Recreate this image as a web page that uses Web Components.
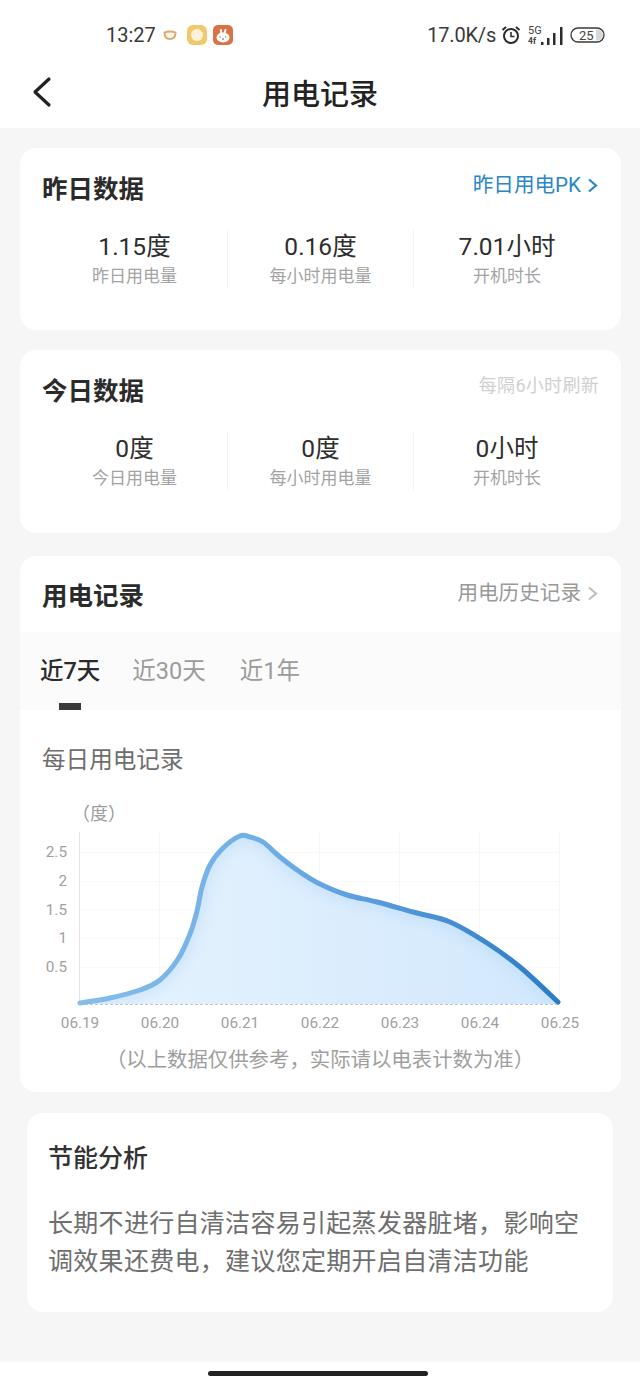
<!DOCTYPE html>
<html lang="zh">
<head>
<meta charset="utf-8">
<title>用电记录</title>
<style>
    html, body {
        margin: 0;
        background: #f6f6f6;
        font-family: "Roboto", "Noto Sans CJK SC", sans-serif;
    }
    body {
        width: 640px;
        height: 1387px;
        overflow: hidden;
        display: flex;
        flex-direction: column;
    }
    main {
        flex: 1;
        display: flex;
        flex-direction: column;
        padding: 20px 19px 0 20px;
    }
</style>
</head>
<body>
<app-header heading="用电记录"></app-header>
<main>
    <data-card heading="昨日数据" style="height:182px">
        <a-link slot="aside" color="#2a86c4">昨日用电PK</a-link>
        <stat-item value="1.15度" label="昨日用电量"></stat-item>
        <stat-item value="0.16度" label="每小时用电量"></stat-item>
        <stat-item value="7.01小时" label="开机时长"></stat-item>
    </data-card>
    <data-card heading="今日数据" style="height:183px;margin-top:20px">
        <span slot="aside" style="color:#d0d0d0;font-size:18px;letter-spacing:.3px;position:relative;top:-1px">每隔6小时刷新</span>
        <stat-item value="0度" label="今日用电量"></stat-item>
        <stat-item value="0度" label="每小时用电量"></stat-item>
        <stat-item value="0小时" label="开机时长"></stat-item>
    </data-card>
    <record-card></record-card>
    <advice-card heading="节能分析">长期不进行自清洁容易引起蒸发器脏堵，影响空调效果还费电，建议您定期开启自清洁功能</advice-card>
</main>
<home-bar></home-bar>

<script>
class AppHeader extends HTMLElement {
    constructor() {
        super();
        this.attachShadow({mode: "open"});
        this.shadowRoot.innerHTML = `
            <style>
                :host {
                    display: block;
                    height: 128px;
                    background: #fff;
                    color: #2b2b2b;
                }
                .status {
                    height: 70px;
                    box-sizing: border-box;
                    padding: 0 34px 0 106px;
                    display: flex;
                    align-items: center;
                    font-size: 20px;
                    color: #3a3a3a;
                }
                .status svg { display: block; flex: none; }
                .grow { flex: 1; }
                .title {
                    height: 58px;
                    margin-top: -7px;
                    display: flex;
                    align-items: center;
                    justify-content: center;
                    position: relative;
                    font-size: 29px;
                    font-weight: 500;
                    color: #222;
                }
                .back { position: absolute; left: 32px; top: 13px; }
            </style>
            <div class="status">
                <span>13:27</span>
                <svg width="14" height="12" viewBox="0 0 14 12" style="margin-left:7px">
                    <path d="M1.500 3.500C4 2 10 2 12.500 3.500C12.500 7.500 10.500 10 7 10S1.500 7.500 1.500 3.500z" fill="#fbf3e6" stroke="#d9ab74" stroke-width="2"/>
                </svg>
                <svg width="20" height="20" viewBox="0 0 20 20" style="margin-left:10px">
                    <rect width="20" height="20" rx="6" fill="#f2c96a"/>
                    <circle cx="10" cy="10" r="6" fill="#fdf3d8"/>
                </svg>
                <svg width="20" height="20" viewBox="0 0 20 20" style="margin-left:6px">
                    <rect width="20" height="20" rx="5" fill="#dc7148"/>
                    <ellipse cx="10" cy="12.500" rx="6.500" ry="5" fill="#fff"/>
                    <path d="M8 8V5M11.500 8l1-3" stroke="#fff" stroke-width="2" stroke-linecap="round"/>
                    <path d="M6.500 12h1.200M12 12h1.200M9 14h2" stroke="#8a4a33" stroke-width="1"/>
                </svg>
                <span class="grow"></span>
                <span style="letter-spacing:-.2px">17.0K/s</span>
                <svg width="20" height="20" viewBox="0 0 20 20" style="margin-left:5px" fill="none" stroke="#2c2c2c">
                    <circle cx="10" cy="11" r="7" stroke-width="2"/>
                    <path d="M10 7v4.500h3.500" stroke-width="1.600"/>
                    <path d="M1.500 5L5 2M18.500 5L15 2" stroke-width="2"/>
                </svg>
                <svg width="35" height="22" viewBox="0 0 35 22" style="margin-left:7px">
                    <text x="0" y="9.500" font-size="11" fill="#444" font-family="Roboto">5G</text>
                    <text x="0" y="20" font-size="8.500" font-weight="700" fill="#444" font-family="Roboto">4f</text>
                    <g fill="#2c2c2c">
                        <rect x="13" y="18" width="2.500" height="3"/>
                        <rect x="19" y="14" width="2.500" height="7"/>
                        <rect x="25" y="9" width="2.500" height="12"/>
                        <rect x="32" y="3" width="2.500" height="18"/>
                    </g>
                </svg>
                <svg width="36" height="18" viewBox="0 0 36 18" style="margin-left:7px">
                    <rect x="1" y="2" width="33" height="14" rx="7" fill="none" stroke="#3a3a3a" stroke-width="1.300"/>
                    <path d="M26 3.500h1.500a5.500 5.500 0 0 1 0 11H26z" fill="#d8d8d8"/>
                    <text x="9" y="13.500" font-size="13" fill="#444" font-family="Roboto">25</text>
                </svg>
            </div>
            <div class="title">
                <svg class="back" width="20" height="32" viewBox="0 0 20 32" fill="none" stroke="#222" stroke-width="3.200" stroke-linecap="round" stroke-linejoin="round">
                    <path d="M17 3L3 16l14 13"/>
                </svg>
                <span>${this.getAttribute("heading")}</span>
            </div>
        `;
    }
}
window.customElements.define('app-header', AppHeader);

class ALink extends HTMLElement {
    constructor() {
        super();
        this.attachShadow({mode: "open"});
        const color = this.getAttribute("color");
        this.shadowRoot.innerHTML = `
            <style>
                :host {
                    display: inline-flex;
                    align-items: center;
                    gap: 6px;
                    margin-right: 1px;
                    font-size: 20.600px;
                    color: ${color};
                }
            </style>
            <slot></slot>
            <svg width="11" height="15" viewBox="0 0 11 15" fill="none" stroke="${color}" stroke-width="2.200">
                <path d="M2 1.500L9 7.500l-7 6"/>
            </svg>
        `;
    }
}
window.customElements.define('a-link', ALink);

class DataCard extends HTMLElement {
    constructor() {
        super();
        this.attachShadow({mode: "open"});
        this.shadowRoot.innerHTML = `
            <style>
                :host {
                    display: block;
                    box-sizing: border-box;
                    background: #fff;
                    border-radius: 16px;
                    padding: 22px 22px 0 22px;
                    flex: none;
                }
                .top {
                    display: flex;
                    justify-content: space-between;
                    align-items: flex-start;
                    height: 40px;
                }
                h3 {
                    margin: 0;
                    font-size: 25.500px;
                    line-height: 38px;
                    font-weight: 700;
                    color: #2b2b2b;
                }
                .aside { line-height: 30px; }
                .stats {
                    display: grid;
                    grid-template-columns: 186px 186px 186px;
                    margin-top: 20px;
                }
            </style>
            <div class="top">
                <h3>${this.getAttribute("heading")}</h3>
                <div class="aside"><slot name="aside"></slot></div>
            </div>
            <div class="stats"><slot></slot></div>
        `;
    }
}
window.customElements.define('data-card', DataCard);

class StatItem extends HTMLElement {
    constructor() {
        super();
        this.attachShadow({mode: "open"});
        this.shadowRoot.innerHTML = `
            <style>
                :host {
                    display: flex;
                    flex-direction: column;
                    align-items: center;
                    height: 58px;
                    border-right: 1px solid #f2f2f2;
                }
                :host(:last-child) { border-right: 0; }
                .value {
                    font-size: 24.500px;
                    line-height: 34px;
                    color: #2e2e2e;
                }
                .label {
                    font-size: 17px;
                    line-height: 24px;
                    color: #a3a3a3;
                }
            </style>
            <span class="value">${this.getAttribute("value")}</span>
            <span class="label">${this.getAttribute("label")}</span>
        `;
    }
}
window.customElements.define('stat-item', StatItem);

class TabBar extends HTMLElement {
    constructor() {
        super();
        this.attachShadow({mode: "open"});
        this.shadowRoot.innerHTML = `
            <style>
                :host {
                    display: flex;
                    gap: 32px;
                    height: 78px;
                    box-sizing: border-box;
                    padding: 18px 0 0 20px;
                    background: #fbfbfb;
                    font-size: 23.500px;
                    line-height: 42px;
                    color: #9c9c9c;
                }
                .on {
                    position: relative;
                    color: #2b2b2b;
                    font-weight: 500;
                }
                .on::after {
                    content: "";
                    position: absolute;
                    left: 19px;
                    width: 22px;
                    height: 7px;
                    bottom: 0;
                    background: #3a3a3a;
                }
                .last { margin-left: 2px; }
            </style>
            <span class="on">近7天</span>
            <span>近30天</span>
            <span class="last">近1年</span>
        `;
    }
}
window.customElements.define('tab-bar', TabBar);

// smooth line through the points read off the curve
function smoothLine(p) {
    let d = `M${p[0][0]} ${p[0][1]}`;
    for (let i = 0; i < p.length - 1; i++) {
        const a = p[i - 1] || p[i], b = p[i], c = p[i + 1], e = p[i + 2] || c;
        const c1 = [b[0] + (c[0] - a[0]) / 6, b[1] + (c[1] - a[1]) / 6];
        const c2 = [c[0] - (e[0] - b[0]) / 6, c[1] - (e[1] - b[1]) / 6];
        d += ` C${c1[0].toFixed(1)} ${c1[1].toFixed(1)} ${c2[0].toFixed(1)} ${c2[1].toFixed(1)} ${c[0]} ${c[1]}`;
    }
    return d;
}

class UsageChart extends HTMLElement {
    constructor() {
        super();
        this.attachShadow({mode: "open"});
        const line = smoothLine([
            [80, 1003], [110, 998], [140, 990], [160, 980], [178, 959], [190, 934], [197, 911],
            [202, 887], [210, 865], [223, 848], [240, 836], [250, 837], [263, 842], [280, 857],
            [300, 872], [320, 884], [347, 895], [377, 902], [417, 913], [450, 922], [487, 943],
            [520, 967], [558, 1002]
        ]);
        const xs = ["06.19", "06.20", "06.21", "06.22", "06.23", "06.24", "06.25"];
        const ys = [["2.5", 852], ["2", 881], ["1.5", 909.500], ["1", 938], ["0.5", 967]];
        let grid = "";
        xs.forEach((d, i) => {
            const x = 80 + i * 80;
            grid += `<path d="M${x - .5} 832V1004" stroke="${i ? "#f7f7f7" : "#e6e6e6"}"/>`;
            grid += `<text x="${x}" y="1028" text-anchor="middle" class="tick">${d}</text>`;
        });
        ys.forEach(([t, y]) => {
            grid += `<path d="M80 ${y + .5}H560" stroke="#f9f9f9"/>`;
            grid += `<text x="67" y="${y + 5}" text-anchor="end" class="tick">${t}</text>`;
        });
        const area = `${line} L560 1004 H80 Z`;
        this.shadowRoot.innerHTML = `
            <style>
                :host { display: block; height: 292px; }
                svg { display: block; }
                .tick { font-size: 15.300px; fill: #a0a0a0; font-family: "Roboto", sans-serif; }
                .unit { font-size: 18px; fill: #9c9c9c; font-family: "Noto Sans CJK SC", sans-serif; }
            </style>
            <svg width="601" height="292" viewBox="20 790 601 292">
                <defs>
                    <linearGradient id="stroke" gradientUnits="userSpaceOnUse" x1="80" y1="0" x2="560" y2="0">
                        <stop offset="0" stop-color="#85bdeb"/>
                        <stop offset=".4" stop-color="#6fade6"/>
                        <stop offset=".75" stop-color="#4a8fd4"/>
                        <stop offset="1" stop-color="#2a7cc6"/>
                    </linearGradient>
                    <linearGradient id="fill" gradientUnits="userSpaceOnUse" x1="80" y1="0" x2="560" y2="0">
                        <stop offset="0" stop-color="#e6f3fd"/>
                        <stop offset="1" stop-color="#d2e8fd"/>
                    </linearGradient>
                    <clipPath id="inside"><path d="${area}"/></clipPath>
                    <filter id="soft" x="-10%" y="-20%" width="120%" height="140%"><feGaussianBlur stdDeviation="7"/></filter>
                </defs>
                ${grid}
                <text x="72" y="820" class="unit">（度）</text>
                <path d="${area}" fill="url(#fill)"/>
                <g clip-path="url(#inside)">
                    <path d="${line}" fill="none" stroke="#a9d2f7" stroke-width="10" opacity=".55" filter="url(#soft)"/>
                </g>
                <path d="M80 1004.500H560" stroke="#c4c4c4" stroke-dasharray="3 2"/>
                <path d="${line}" fill="none" stroke="url(#stroke)" stroke-width="5" stroke-linecap="round"/>
                <text x="320" y="1067" text-anchor="middle" style="font-size:20.400px;fill:#9e9e9e;font-family:'Roboto','Noto Sans CJK SC',sans-serif">（以上数据仅供参考，实际请以电表计数为准）</text>
            </svg>
        `;
    }
}
window.customElements.define('usage-chart', UsageChart);

class RecordCard extends HTMLElement {
    constructor() {
        super();
        this.attachShadow({mode: "open"});
        this.shadowRoot.innerHTML = `
            <style>
                :host {
                    display: block;
                    flex: none;
                    height: 536px;
                    margin-top: 23px;
                    background: #fff;
                    border-radius: 16px;
                    overflow: hidden;
                }
                .top {
                    height: 76px;
                    box-sizing: border-box;
                    padding: 21px 22px 0;
                    display: flex;
                    justify-content: space-between;
                    align-items: flex-start;
                }
                h3 {
                    margin: 0;
                    font-size: 25.500px;
                    line-height: 38px;
                    font-weight: 700;
                    color: #2b2b2b;
                }
                a-link { line-height: 32px; }
                h4 {
                    margin: 0;
                    padding: 34px 0 0 22px;
                    height: 46px;
                    font-size: 23.600px;
                    line-height: 32px;
                    font-weight: 400;
                    color: #6e6e6e;
                }
            </style>
            <div class="top">
                <h3>用电记录</h3>
                <a-link color="#c0c0c0"><span style="color:#999">用电历史记录</span></a-link>
            </div>
            <tab-bar></tab-bar>
            <h4>每日用电记录</h4>
            <usage-chart></usage-chart>
        `;
    }
}
window.customElements.define('record-card', RecordCard);

class AdviceCard extends HTMLElement {
    constructor() {
        super();
        this.attachShadow({mode: "open"});
        this.shadowRoot.innerHTML = `
            <style>
                :host {
                    display: block;
                    flex: none;
                    box-sizing: border-box;
                    height: 199px;
                    margin: 21px 8px 0 7px;
                    padding: 26px 21px 0;
                    background: #fff;
                    border-radius: 16px;
                }
                h3 {
                    margin: 0;
                    font-size: 25px;
                    line-height: 40px;
                    font-weight: 500;
                    color: #333;
                }
                p {
                    margin: 26px 0 0;
                    font-size: 25px;
                    line-height: 38px;
                    color: #6e6e6e;
                    letter-spacing: .3px;
                }
            </style>
            <h3>${this.getAttribute("heading")}</h3>
            <p><slot></slot></p>
        `;
    }
}
window.customElements.define('advice-card', AdviceCard);

class HomeBar extends HTMLElement {
    constructor() {
        super();
        this.attachShadow({mode: "open"});
        this.shadowRoot.innerHTML = `
            <style>
                :host {
                    display: flex;
                    justify-content: center;
                    height: 25px;
                    box-sizing: border-box;
                    padding: 9px 4px 0 0;
                    background: #fff;
                    flex: none;
                }
                div {
                    width: 220px;
                    height: 5px;
                    border-radius: 3px;
                    background: #222;
                }
            </style>
            <div></div>
        `;
    }
}
window.customElements.define('home-bar', HomeBar);
</script>
</body>
</html>
